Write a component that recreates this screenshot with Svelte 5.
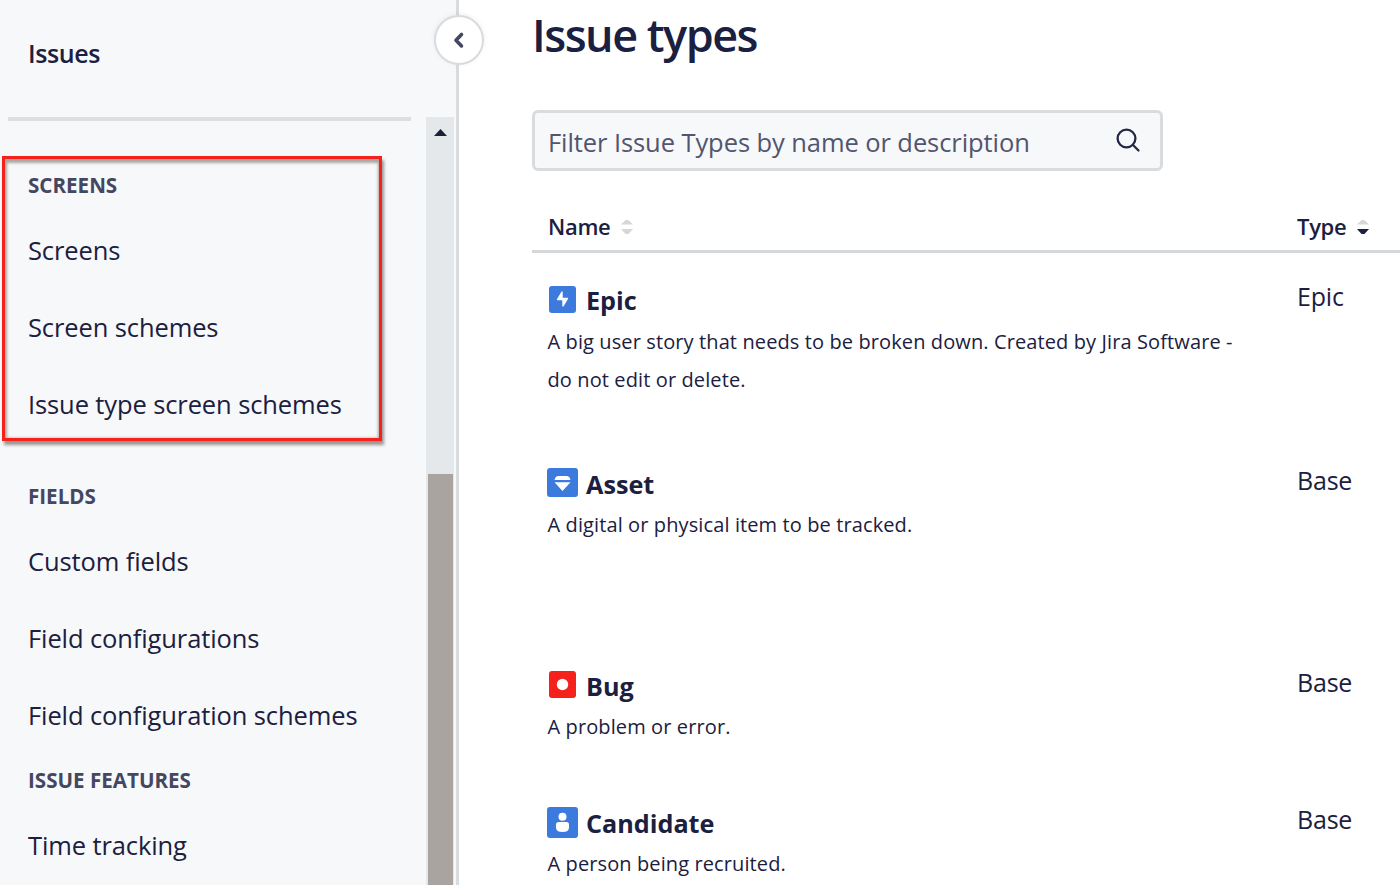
<script>
  const groups = [
    { title: 'SCREENS', gap: 27, marked: true, items: ['Screens', 'Screen schemes', 'Issue type screen schemes'] },
    { title: 'FIELDS', gap: 0, items: ['Custom fields', 'Field configurations', 'Field configuration schemes'] },
    { title: 'ISSUE FEATURES', gap: 0, items: ['Time tracking'] }
  ];
  const rows = [
    { name: 'Epic', icon: 'epic', type: 'Epic', height: 183, text: 'A big user story that needs to be broken down. Created by Jira Software - do not edit or delete.' },
    { name: 'Asset', icon: 'asset', type: 'Base', height: 202, text: 'A digital or physical item to be tracked.' },
    { name: 'Bug', icon: 'bug', type: 'Base', height: 138, text: 'A problem or error.' },
    { name: 'Candidate', icon: 'person', type: 'Base', height: 137, text: 'A person being recruited.' }
  ];
</script>

{#snippet sorter(active)}
  <svg class="sorter" width="12" height="16" viewBox="0 0 12 16">
    <path d="M0 5.5 4.5 1h3L12 5.5z" fill="#d5d8db" />
    <path d="M0 10h12l-4.500 5h-3z" fill={active ? '#1c2140' : '#d5d8db'} />
  </svg>
{/snippet}

<div class="page">
  <aside>
    <header>Issues</header>
    <div class="body">
      <nav>
        {#each groups as g}
          <section style:margin-bottom="{g.gap}px">
            <h2>{g.title}</h2>
            {#each g.items as item}<a>{item}</a>{/each}
            {#if g.marked}<div class="marker"></div>{/if}
          </section>
        {/each}
      </nav>
      <div class="scrollbar">
        <svg width="28" height="357" viewBox="0 0 28 357"><path d="M8 19 14.5 12 21 19z" fill="#1b1f3b" /></svg>
        <div class="thumb"></div>
      </div>
    </div>
    <button class="collapse" aria-label="Collapse">
      <svg width="48" height="48" viewBox="0 0 48 48"><path d="M25.500 17.500 20 23.200l5.500 5.700" fill="none" stroke="#45465f" stroke-width="3.6" stroke-linecap="round" stroke-linejoin="round" /></svg>
    </button>
  </aside>

  <main>
    <h1>Issue types</h1>
    <div class="search">
      <span>Filter Issue Types by name or description</span>
      <svg width="26" height="26" viewBox="0 0 26 26" fill="none" stroke="#23274a" stroke-width="2.3" stroke-linecap="round"><circle cx="11.5" cy="11.5" r="8.9" /><path d="m18 18 5.5 5.5" /></svg>
    </div>
    <div class="thead">
      <div class="namecol"><span>Name</span>{@render sorter(false)}</div>
      <div class="typecol"><span>Type</span>{@render sorter(true)}</div>
    </div>
    {#each rows as r}
      <div class="row {r.icon}" style:height="{r.height}px">
        <div class="namecol">
          <div class="title">
            <svg width="31" height="31" viewBox="0 0 31 31">
              {#if r.icon === 'epic'}
                <rect x="2" y="2" width="27" height="27" rx="3" fill="#3c7bdd" />
                <path d="M15 8v6.500h5.500L16 22v-6.500h-5.500z" fill="#fff" stroke="#fff" stroke-width="1.4" stroke-linejoin="round" />
              {:else if r.icon === 'asset'}
                <rect y="1" width="31" height="29" rx="3" fill="#3c7bdd" />
                <path d="M7.500 13q.8-4 4-4h8q3.200 0 4 4zM7.500 15.200h16l-8 8.800z" fill="#fff" />
              {:else if r.icon === 'bug'}
                <rect x="2" y="2" width="27" height="27" rx="3" fill="#f5211d" />
                <circle cx="15.500" cy="15.500" r="5.700" fill="#fff" />
              {:else}
                <rect width="31" height="31" rx="3" fill="#3c7bdd" />
                <circle cx="15.500" cy="9.800" r="4" fill="#fff" />
                <path d="M11.500 15h8q2.500 0 2.500 2.500v3q0 4.500-6.500 4.500T9 20.500v-3Q9 15 11.500 15z" fill="#fff" />
              {/if}
            </svg>
            <strong>{r.name}</strong>
          </div>
          <p>{r.text}</p>
        </div>
        <div class="typecol">{r.type}</div>
      </div>
    {/each}
  </main>
</div>

<style>
  :global(body) { margin: 0; }
  * { box-sizing: border-box; }
  .page { display: flex; width: 1400px; height: 885px; overflow: hidden; background: #fff; color: #1b2040; font-family: "Open Sans", sans-serif; }
  aside { position: relative; width: 459px; flex: none; display: flex; flex-direction: column; background: #f7f8fa; border-right: 3px solid #d9dcdf; }
  header { height: 121px; margin: 0 45px 0 8px; padding-left: 20px; border-bottom: 4px solid #dcdee1; font-size: 25px; letter-spacing: -.4px; font-weight: 600; line-height: 107px; flex: none; }
  .body { display: flex; flex: 1; min-height: 0; margin-top: -4px; }
  nav { flex: 1; padding-top: 42px; }
  section { position: relative; }
  h2 { margin: 0; padding-left: 28px; height: 53px; line-height: 53px; font-size: 20.600px; font-weight: 700; color: #45465f; white-space: nowrap; }
  nav a { display: block; padding-left: 28px; height: 77px; line-height: 77px; font-size: 25.500px; letter-spacing: -.11px; white-space: nowrap; }
  .marker { position: absolute; left: 2px; top: -3px; width: 380px; height: 285px; border: 3px solid #f5211d; box-shadow: 2px 4px 3px #999491, inset 2px 4px 3px #aaa5a1, inset -1px 0 3px #aaa5a1; }
  .scrollbar { width: 28px; margin-right: 2px; background: #e5e8ea; display: flex; flex-direction: column; flex: none; }
  .scrollbar svg { display: block; flex: none; }
  .thumb { flex: 1; margin: 0 1px 0 2px; background: #a9a4a0; }
  .collapse { position: absolute; left: 434px; top: 15px; width: 50px; height: 50px; padding: 0; border: 2px solid #d9dcdf; border-radius: 50%; background: #fff; box-shadow: 0 -1px 5px #0001; display: grid; place-items: center; }
  main { flex: 1; min-width: 0; padding-left: 73px; }
  h1 { margin: 0; height: 110px; line-height: 69px; font-size: 45px; font-weight: 600; letter-spacing: -1.500px; }
  .search { display: flex; align-items: center; justify-content: space-between; width: 631px; height: 61px; padding: 0 19px 0 13px; border: 3px solid #d9dcdf; border-radius: 6px; background: #f7f8fa; font-size: 25.500px; letter-spacing: -.08px; color: #515570; white-space: nowrap; }
  .search span { padding-top: 2px; }
  .search svg { margin-bottom: 1px; }
  .thead { display: flex; height: 82px; padding: 39px 0 0 16px; border-bottom: 3px solid #d5d8da; font-size: 22px; letter-spacing: -.3px; font-weight: 600; line-height: 32px; }
  .thead > div { display: flex; align-items: center; height: 38px; gap: 11px; }
  .thead span { height: 38px; }
  .sorter { margin-top: -4px; }
  .namecol { width: 749px; flex: none; }
  .row { display: flex; padding: 31px 0 0 15px; }
  .row .typecol { padding-left: 1px; font-size: 25px; line-height: 25px; letter-spacing: -.2px; }
  .asset .typecol, .bug .typecol { line-height: 27px; }
  .title { display: flex; align-items: center; gap: 8px; height: 31px; }
  strong { font-size: 25.200px; line-height: 31px; font-weight: 700; position: relative; top: 1px; }
  .asset strong, .bug strong { top: 2px; }
  p { margin: 8px 0 0; padding-left: .5px; width: 700px; font-size: 20px; letter-spacing: .11px; line-height: 38px; }
  .person p { margin-top: 7px; }
</style>
